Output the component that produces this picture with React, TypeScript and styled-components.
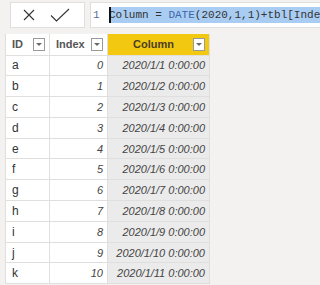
import React from "react";
import styled, { createGlobalStyle } from "styled-components";

const GlobalStyle = createGlobalStyle`
  html, body {
    margin: 0;
    padding: 0;
    background: #f3f2f1;
    overflow: hidden;
  }
  body {
    width: 320px;
    height: 285px;
    font-family: "Liberation Sans", Arial, sans-serif;
  }
`;

const Page = styled.div`
  width: 320px;
  height: 285px;
  overflow: hidden;
`;

const FormulaBar = styled.div`
  display: flex;
  gap: 5px;
  padding: 2px 0 0 10px;
  height: 26px;
`;

const ActionBox = styled.div`
  width: 75px;
  flex: none;
  box-sizing: border-box;
  background: #ffffff;
  border: 1px solid #e1dfdd;
  display: flex;
  align-items: center;
  padding-left: 12px;
  gap: 15px;
`;

const EditorBox = styled.div`
  flex: 1;
  box-sizing: border-box;
  background: #ffffff;
  border: 1px solid #e1dfdd;
  border-right: none;
  display: flex;
  align-items: center;
  overflow: hidden;
  white-space: nowrap;
  font-family: "Liberation Mono", "DejaVu Sans Mono", monospace;
  font-size: 11px;
`;

const LineNo = styled.span`
  color: #5b6b9c;
  width: 16px;
  padding-left: 2px;
  flex: none;
`;

const Selection = styled.span`
  position: relative;
  background: #a9cdf2;
  color: #333333;
  line-height: 16px;
  padding-right: 40px;
`;

const Caret = styled.span`
  position: absolute;
  left: 0;
  top: 0;
  width: 2px;
  height: 16px;
  background: #111111;
`;

const Keyword = styled.span`
  color: #3f67a8;
`;

const Grid = styled.table`
  margin: 6px 0 0 5px;
  border-collapse: collapse;
  table-layout: fixed;
  width: 204px;
`;

const HeadCell = styled.th<{ $accent?: boolean; $w: number }>`
  width: ${({ $w }) => $w}px;
  height: 21px;
  box-sizing: border-box;
  padding: 0 4px 0 6px;
  border: 1px solid #e1dfdd;
  border-top: none;
  background: ${({ $accent }) => ($accent ? "#f2c811" : "#ffffff")};
  font-size: 11px;
  font-weight: bold;
  color: ${({ $accent }) => ($accent ? "#4a4020" : "#555555")};
  text-align: left;
`;

const HeadInner = styled.div<{ $center?: boolean }>`
  display: flex;
  align-items: center;
  justify-content: space-between;
  span {
    flex: 1;
    text-align: ${({ $center }) => ($center ? "center" : "left")};
  }
`;

const Drop = styled.div`
  width: 12px;
  height: 13px;
  box-sizing: border-box;
  background: #ffffff;
  border: 1px solid #9a9a9a;
  display: flex;
  align-items: center;
  justify-content: center;
  flex: none;
  &::after {
    content: "";
    border-left: 3px solid transparent;
    border-right: 3px solid transparent;
    border-top: 3px solid #6a6a6a;
  }
`;

const Cell = styled.td<{ $kind: "text" | "num" | "date" }>`
  height: 20.8px;
  box-sizing: border-box;
  padding: 0 ${({ $kind }) => ($kind === "text" ? "0 0 6px" : "4px 0 0")};
  border: 1px solid #e1dfdd;
  background: ${({ $kind }) => ($kind === "date" ? "#ebebeb" : "#ffffff")};
  font-size: ${({ $kind }) => ($kind === "text" ? "12px" : "11px")};
  font-style: ${({ $kind }) => ($kind === "text" ? "normal" : "italic")};
  color: ${({ $kind }) => ($kind === "text" ? "#333333" : "#444444")};
  text-align: ${({ $kind }) => ($kind === "text" ? "left" : "right")};
  white-space: nowrap;
`;

const ids = ["a", "b", "c", "d", "e", "f", "g", "h", "i", "j", "k"];

const CrossIcon = () => (
  <svg width="12" height="12" viewBox="0 0 12 12">
    <path d="M1 1 L11 11 M11 1 L1 11" stroke="#333" strokeWidth="1.1" fill="none" />
  </svg>
);

const CheckIcon = () => (
  <svg width="20" height="14" viewBox="0 0 20 14">
    <path d="M1 7.5 L6.5 13 L19 1" stroke="#333" strokeWidth="1.1" fill="none" />
  </svg>
);

export default function App() {
  return (
    <Page>
      <GlobalStyle />
      <FormulaBar>
        <ActionBox>
          <CrossIcon />
          <CheckIcon />
        </ActionBox>
        <EditorBox>
          <LineNo>1</LineNo>
          <Selection>
            <Caret />
            Column = <Keyword>DATE</Keyword>(2020,1,1)+tbl[Index]
          </Selection>
        </EditorBox>
      </FormulaBar>
      <Grid>
        <thead>
          <tr>
            <HeadCell $w={44}>
              <HeadInner>
                <span>ID</span>
                <Drop />
              </HeadInner>
            </HeadCell>
            <HeadCell $w={58}>
              <HeadInner>
                <span>Index</span>
                <Drop />
              </HeadInner>
            </HeadCell>
            <HeadCell $w={102} $accent>
              <HeadInner $center>
                <span>Column</span>
                <Drop />
              </HeadInner>
            </HeadCell>
          </tr>
        </thead>
        <tbody>
          {ids.map((id, i) => (
            <tr key={id}>
              <Cell $kind="text">{id}</Cell>
              <Cell $kind="num">{i}</Cell>
              <Cell $kind="date">{`2020/1/${i + 1} 0:00:00`}</Cell>
            </tr>
          ))}
        </tbody>
      </Grid>
    </Page>
  );
}
